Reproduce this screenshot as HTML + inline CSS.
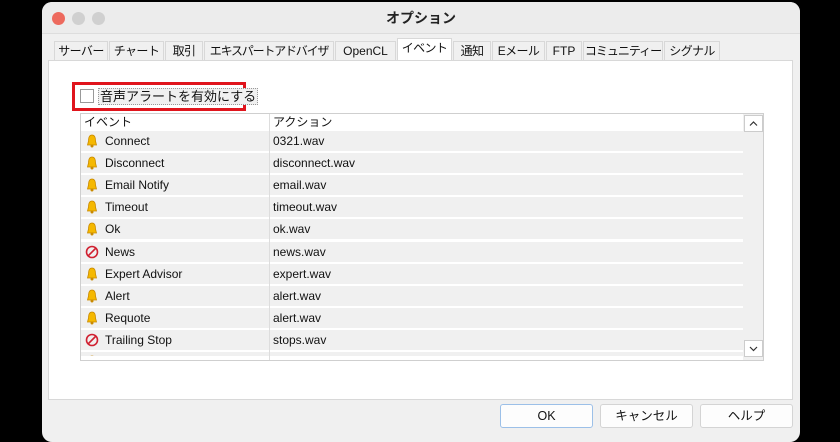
<!DOCTYPE html><html><head><meta charset="utf-8"><style>
*{margin:0;padding:0;box-sizing:border-box}
body{width:840px;height:436px;background:#000;position:relative;overflow:hidden;font-family:"Liberation Sans","Noto Sans CJK JP",sans-serif;font-size:12px;color:#111}
.win{position:absolute;left:42px;top:2px;width:758px;height:440px;background:#f0f0f0;border-radius:10px;overflow:hidden}
.title{position:absolute;left:0;top:0;width:100%;height:32px;background:#ececec;border-bottom:1px solid #ddd;text-align:center;line-height:32px;font-size:14px;font-weight:bold;color:#222}
.dot{position:absolute;top:10px;width:13px;height:13px;border-radius:50%;background:#d0d0d0}
.tab{position:absolute;top:41px;height:19px;border:1px solid #d8d8d8;border-bottom:none;background:#f0f0f0;font-size:12px;line-height:18px;text-align:center;white-space:nowrap;letter-spacing:-0.6px;overflow:visible}
.panel{position:absolute;left:6px;top:58px;width:745px;height:340px;background:#fff;border:1px solid #d8d8d8}
.abs{position:absolute}
.row{position:absolute;left:81px;width:662px;height:20px;background:#f0f0f0;line-height:20px;font-size:12px}
.row span{position:absolute}
.btn{position:absolute;top:404px;width:93px;height:24px;background:#fdfdfd;border:1px solid #d4d4d4;border-radius:3px;text-align:center;line-height:22px;font-size:12.5px}
</style></head><body>
<div class="win">
<div class="title">オプション</div>
<div class="dot" style="left:10px;background:#ed6a5e"></div>
<div class="dot" style="left:30px"></div>
<div class="dot" style="left:50px"></div>
</div>
<div class="tab" style="left:54px;width:54px">サーバー</div>
<div class="tab" style="left:109px;width:55px">チャート</div>
<div class="tab" style="left:165px;width:38px">取引</div>
<div class="tab" style="left:204px;width:130px;letter-spacing:-1.2px">エキスパートアドバイザ</div>
<div class="tab" style="left:335px;width:61px;letter-spacing:0">OpenCL</div>
<div class="tab" style="left:397px;width:55px;top:38px;height:22px;background:#fff;z-index:2">イベント</div>
<div class="tab" style="left:453px;width:38px">通知</div>
<div class="tab" style="left:492px;width:53px">Eメール</div>
<div class="tab" style="left:546px;width:36px;letter-spacing:0">FTP</div>
<div class="tab" style="left:583px;width:80px;letter-spacing:-1px">コミュニティー</div>
<div class="tab" style="left:664px;width:56px">シグナル</div>
<div class="panel" style="left:48px;top:60px"></div>
<div class="abs" style="left:72px;top:82px;width:174px;height:29px;border:3px solid #e0141c"></div>
<div class="abs" style="left:80px;top:89px;width:14px;height:14px;border:1px solid #999;background:#fff"></div>
<div class="abs" style="left:98px;top:88px;font-size:13px;line-height:15px;background:#f0f0f0;border:1px dotted #999;padding:0 1px">音声アラートを有効にする</div>
<div class="abs" style="left:80px;top:113px;width:684px;height:248px;border:1px solid #cfcfcf;background:#fff"></div>
<div class="abs" style="left:84px;top:114px;line-height:16px">イベント</div>
<div class="abs" style="left:273px;top:114px;line-height:16px">アクション</div>
<div class="abs" style="left:269px;top:114px;width:1px;height:246px;background:#ddd;z-index:3"></div>
<div class="abs" style="left:743px;top:114px;width:20px;height:246px;background:#f0f0f0"></div>
<div class="abs" style="left:744px;top:115px;width:19px;height:17px;background:#fff;border:1px solid #ccc"><svg width="17" height="15"><path d="M5 9.5L8.5 6L12 9.5" fill="none" stroke="#333" stroke-width="1.2"/></svg></div>
<div class="abs" style="left:744px;top:340px;width:19px;height:17px;background:#fff;border:1px solid #ccc"><svg width="17" height="15"><path d="M5 6L8.5 9.5L12 6" fill="none" stroke="#333" stroke-width="1.2"/></svg></div>
<div id="rows"></div>
<div class="btn" style="left:500px;border-color:#9cc0e8">OK</div>
<div class="btn" style="left:600px">キャンセル</div>
<div class="btn" style="left:700px">ヘルプ</div>
<script>
var d=[["b","Connect","0321.wav"],["b","Disconnect","disconnect.wav"],["b","Email Notify","email.wav"],["b","Timeout","timeout.wav"],["b","Ok","ok.wav"],["n","News","news.wav"],["b","Expert Advisor","expert.wav"],["b","Alert","alert.wav"],["b","Requote","alert.wav"],["n","Trailing Stop","stops.wav"],["b","",""]];
var h="";d.forEach(function(r,i){var t=131+i*22.1;var hh=i==10?4:20;
var ic=r[0]=="b"?'<svg width="12" height="14" style="position:absolute;left:5px;top:3px"><path d="M6 1C3 1 2.5 4 2.5 7L1.5 11H10.5L9.5 7C9.5 4 9 1 6 1Z" fill="#f5b800" stroke="#c98a00" stroke-width=".8"/><circle cx="6" cy="12" r="1.5" fill="#c98a00"/></svg>':'<svg width="14" height="14" style="position:absolute;left:4px;top:3px"><circle cx="7" cy="7" r="5.5" fill="none" stroke="#d02030" stroke-width="1.6"/><path d="M3 11L11 3" stroke="#d02030" stroke-width="1.6"/></svg>';
h+='<div class="row" style="top:'+t+'px;height:'+hh+'px;overflow:hidden">'+ic+'<span style="left:24px">'+r[1]+'</span><span style="left:192px">'+r[2]+'</span></div>';});
document.getElementById("rows").innerHTML=h;
</script>
</body></html>
